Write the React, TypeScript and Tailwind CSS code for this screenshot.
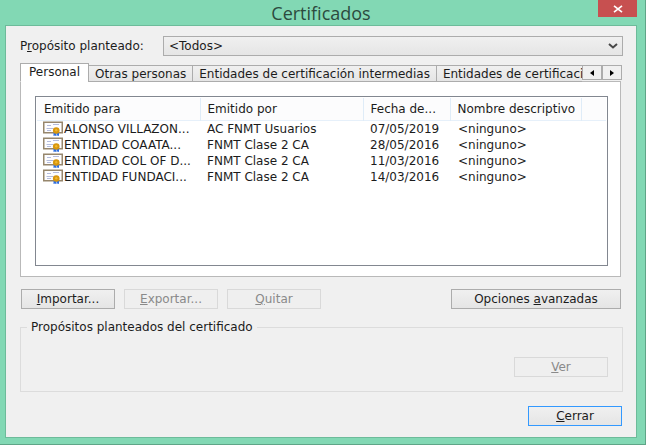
import { useState } from 'react';
import type { ReactNode } from 'react';
import clsx from 'clsx';

const tabs = [
  'Personal',
  'Otras personas',
  'Entidades de certificación intermedias',
  'Entidades de certificaci',
];

const columns = ['Emitido para', 'Emitido por', 'Fecha de...', 'Nombre descriptivo'];

const certificates = [
  { to: 'ALONSO VILLAZON...', by: 'AC FNMT Usuarios', date: '07/05/2019', name: '<ninguno>' },
  { to: 'ENTIDAD COAATA...', by: 'FNMT Clase 2 CA', date: '28/05/2016', name: '<ninguno>' },
  { to: 'ENTIDAD COL OF D...', by: 'FNMT Clase 2 CA', date: '11/03/2016', name: '<ninguno>' },
  { to: 'ENTIDAD FUNDACI...', by: 'FNMT Clase 2 CA', date: '14/03/2016', name: '<ninguno>' },
];

function CertificateIcon() {
  return (
    <svg width="20" height="15" viewBox="0 0 20 15" className="shrink-0" aria-hidden="true">
      <rect x="0.75" y="1.25" width="18.5" height="10.5" fill="#fdfdff" stroke="#96866c" strokeWidth="1.5" />
      <path d="M4 4.500h4M10 3.500h6M3.500 7.500h7M4 9.500h4" stroke="#b4bcdc" strokeWidth="1" />
      <path d="M10.500 11v4l1.500-.5 1 .5v-4zM13.500 11v4l1-.5 1.500.5v-4z" fill="#2f6fe0" />
      <circle cx="13.250" cy="9.500" r="3.300" fill="#d8960c" />
      <circle cx="13.250" cy="9.200" r="1.200" fill="#f0b830" />
    </svg>
  );
}

type ButtonProps = {
  children: ReactNode;
  className?: string;
  disabled?: boolean;
  focused?: boolean;
};

function DialogButton({ children, className = 'w-[94px]', disabled, focused }: ButtonProps) {
  return (
    <button
      type="button"
      disabled={disabled}
      className={clsx(
        'h-5 shrink-0 border leading-4 whitespace-nowrap',
        disabled && 'border-[#d9d9d9] bg-[#efefef] text-[#8a8a8a]',
        !disabled && 'bg-linear-to-b from-[#f0f0f0] to-[#e5e5e5]',
        !disabled && (focused ? 'border-[#3399ff]' : 'border-[#acacac]'),
        className,
      )}
    >
      {children}
    </button>
  );
}

export default function App() {
  const [activeTab, setActiveTab] = useState(0);

  return (
    <div className="flex min-h-screen flex-col border-r border-b border-[#5fa587] bg-[#82d8b4] pr-2 pb-1.5 pl-[5px] font-['DejaVu_Sans',sans-serif] text-[12px] leading-4 text-[#1c1c1c]">
      {/* Title bar */}
      <header className="relative flex h-[25px] items-center justify-center">
        <h1 className="font-['Open_Sans','Noto_Sans',sans-serif] text-[18px] leading-6 text-[#2c4a3e]">Certificados</h1>
        <button
          type="button"
          aria-label="Cerrar ventana"
          className="absolute top-0 right-0 flex h-[17px] w-[39px] items-center justify-center bg-[#c75050]"
        >
          <svg width="10" height="8" viewBox="0 0 10 8" aria-hidden="true">
            <path d="M1 0.800l8 6.400M9 0.800l-8 6.400" stroke="#fff" strokeWidth="1.700" />
          </svg>
        </button>
      </header>

      <main className="flex-1 border border-[#6dbb9a] bg-[#f0f0f0] pt-2.5 pr-[13px] pb-2.5 pl-3.5">
        {/* Purpose filter */}
        <div className="flex items-center">
          <label htmlFor="purpose" className="w-[143px] shrink-0">
            P<u>r</u>opósito planteado:
          </label>
          <div className="relative flex-1">
            <select
              id="purpose"
              className="block h-5 w-full appearance-none border border-[#acacac] bg-linear-to-b from-[#f0f0f0] to-[#e5e5e5] px-[5px] leading-4"
            >
              <option>&lt;Todos&gt;</option>
            </select>
            <svg
              width="10"
              height="6"
              viewBox="0 0 10 6"
              className="pointer-events-none absolute top-[7px] right-[5px]"
              aria-hidden="true"
            >
              <path d="M1 1l4 3.500 4-3.500" fill="none" stroke="#484848" strokeWidth="2" />
            </svg>
          </div>
        </div>

        {/* Tab strip */}
        <div className="relative mt-[7px] mr-px -mb-px flex items-end">
          <div role="tablist" className="flex min-w-0 flex-1 items-end overflow-hidden">
            {tabs.map((tab, i) => (
              <button
                key={tab}
                type="button"
                role="tab"
                aria-selected={i === activeTab}
                onClick={() => setActiveTab(i)}
                className={clsx(
                  'shrink-0 border border-[#acacac] text-left whitespace-nowrap last:flex-1 last:border-r-0 last:pr-0',
                  i === activeTab
                    ? 'h-[19px] border-b-white bg-white px-2 pb-0.5 leading-4'
                    : '-ml-px h-[17px] bg-linear-to-b from-[#f0f0f0] to-[#e5e5e5] px-1.5 leading-4',
                )}
              >
                {tab}
              </button>
            ))}
          </div>
          <div className="mb-0.5 flex">
            <button
              type="button"
              aria-label="Pestañas anteriores"
              className="flex h-[15px] w-5 items-center justify-center border border-[#acacac] bg-[#f0f0f0]"
            >
              <svg width="4" height="6" viewBox="0 0 4 6" aria-hidden="true">
                <path d="M4 0v6L0 3z" />
              </svg>
            </button>
            <button
              type="button"
              aria-label="Pestañas siguientes"
              className="flex h-[15px] w-5 items-center justify-center border border-[#acacac] bg-[#f0f0f0]"
            >
              <svg width="4" height="6" viewBox="0 0 4 6" aria-hidden="true">
                <path d="M0 0v6l4-3z" />
              </svg>
            </button>
          </div>
        </div>

        {/* Certificate list */}
        <div role="tabpanel" className="mr-0.5 border border-[#b9b9b9] bg-white pt-3.5 pr-3 pb-2.5 pl-3.5">
          <div className="min-h-[170px] overflow-hidden border border-[#828790] p-px">
            <table className="w-full table-fixed border-collapse text-left whitespace-nowrap">
              <colgroup>
                <col className="w-[163px]" />
                <col className="w-[163px]" />
                <col className="w-[87px]" />
                <col className="w-[131px]" />
                <col />
              </colgroup>
              <thead>
                <tr className="h-[22px] border-b border-[#e6f0fa] bg-[#fcfcfd]">
                  {columns.map((column) => (
                    <th key={column} className="border-r border-[#dfecf8] p-0 pl-[7px] font-normal">
                      {column}
                    </th>
                  ))}
                  <th className="p-0" />
                </tr>
              </thead>
              <tbody>
                {certificates.map((cert) => (
                  <tr key={cert.to} className="h-4">
                    <td className="p-0 pl-1.5">
                      <span className="flex items-center gap-px">
                        <CertificateIcon />
                        {cert.to}
                      </span>
                    </td>
                    <td className="p-0 pl-[7px]">{cert.by}</td>
                    <td className="p-0 pl-[7px]">{cert.date}</td>
                    <td className="p-0 pl-2">{cert.name}</td>
                    <td className="p-0" />
                  </tr>
                ))}
              </tbody>
            </table>
          </div>
        </div>

        <div className="mt-3 mr-0.5 ml-px flex gap-[9px]">
          <DialogButton>
            <u>I</u>mportar...
          </DialogButton>
          <DialogButton disabled>
            <u>E</u>xportar...
          </DialogButton>
          <DialogButton disabled>
            <u>Q</u>uitar
          </DialogButton>
          <DialogButton className="ml-auto w-[170px]">
            Opciones <u>a</u>vanzadas
          </DialogButton>
        </div>

        <fieldset className="mt-2.5 flex justify-end border border-[#dcdcdc] px-3.5 pt-[22px] pb-3.5">
          <legend className="-ml-2 px-1">Propósitos planteados del certificado</legend>
          <DialogButton disabled>
            <u>V</u>er
          </DialogButton>
        </fieldset>

        <div className="mt-3.5 mr-px flex justify-end">
          <DialogButton focused>
            <u>C</u>errar
          </DialogButton>
        </div>
      </main>
    </div>
  );
}
